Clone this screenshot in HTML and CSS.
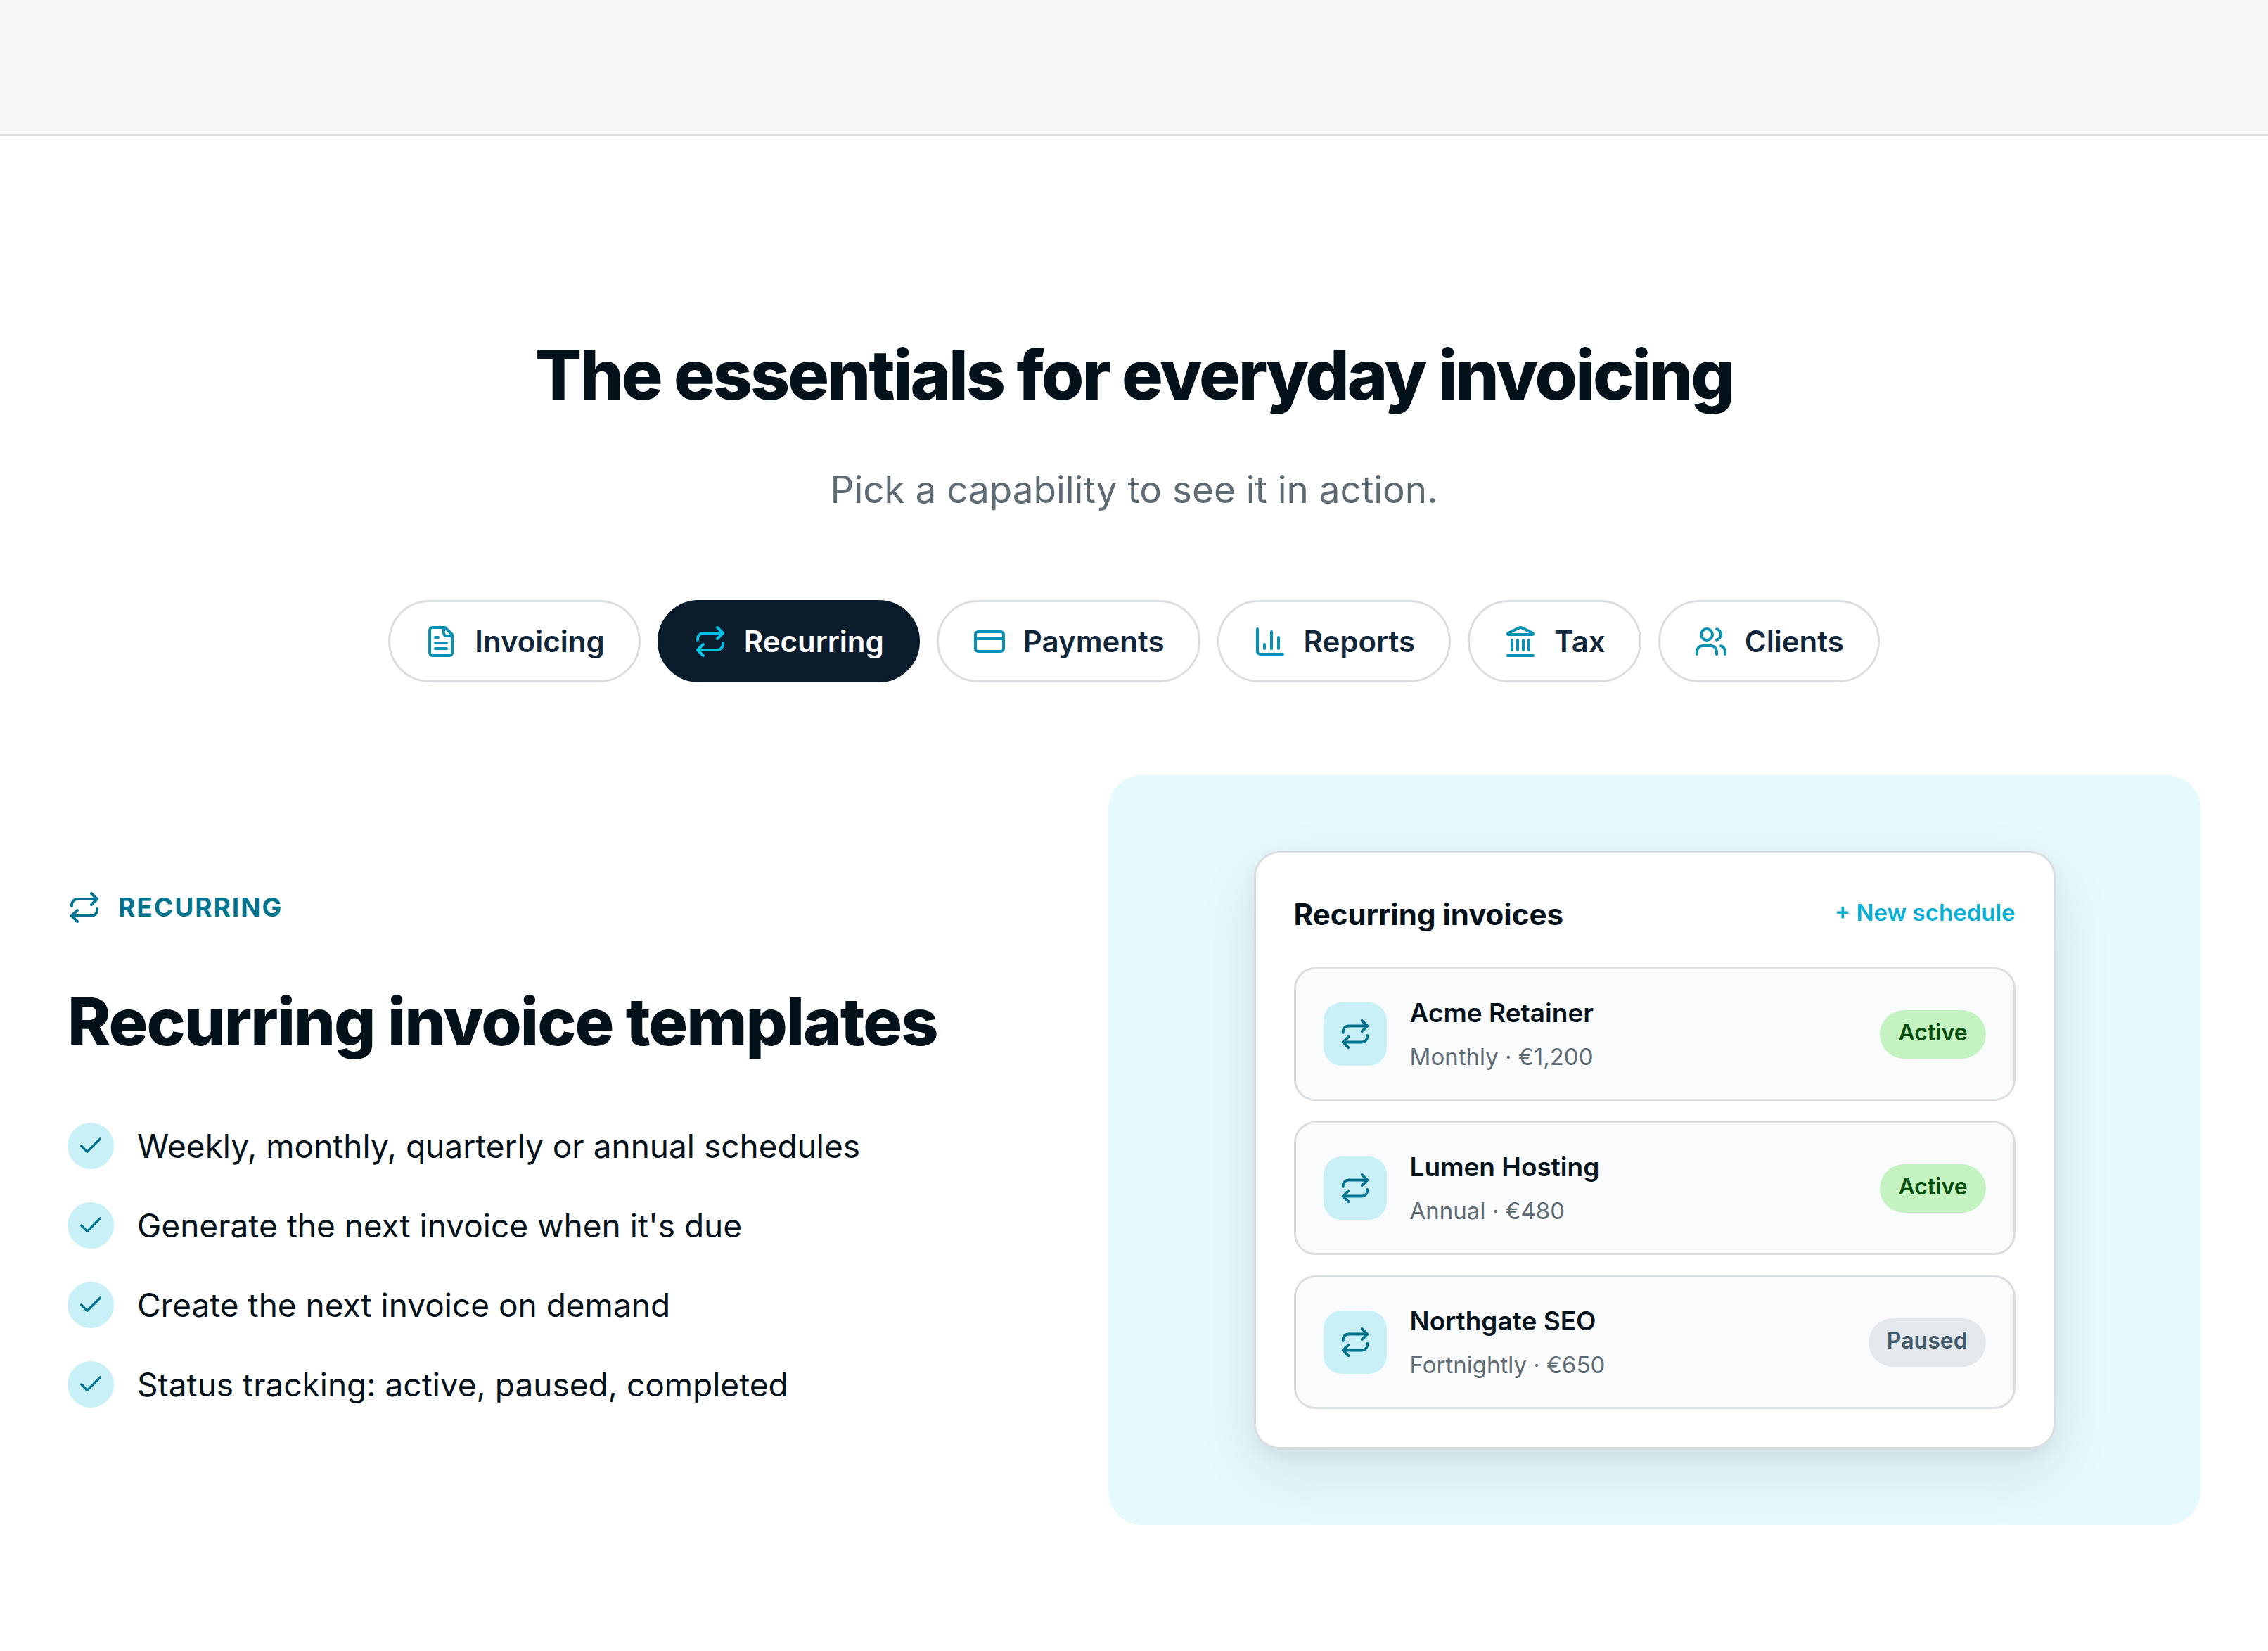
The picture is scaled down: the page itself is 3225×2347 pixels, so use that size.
FILE: index.html
```html
<!DOCTYPE html>
<html lang="en">
<head>
<meta charset="utf-8">
<meta name="viewport" content="width=device-width, initial-scale=1">
<title>The essentials for everyday invoicing</title>
<link rel="stylesheet" href="styles.css">
</head>
<body>
<svg class="sprite" aria-hidden="true">
  <symbol id="i-repeat" viewBox="0 0 24 24"><path d="m17 2 4 4-4 4"/><path d="M3 11v-1a4 4 0 0 1 4-4h14"/><path d="m7 22-4-4 4-4"/><path d="M21 13v1a4 4 0 0 1-4 4H3"/></symbol>
  <symbol id="i-check" viewBox="0 0 24 24"><path d="M20 6 9 17l-5-5"/></symbol>
</svg>
<div class="band"></div>
<main class="features">
  <header class="intro">
    <h1 class="intro-title">The essentials for everyday invoicing</h1>
    <p class="intro-text">Pick a capability to see it in action.</p>
  </header>
  <div class="tabs" role="tablist" aria-label="Capabilities">
    <button class="tab" type="button" role="tab" aria-selected="false">
      <svg class="icon" viewBox="0 0 24 24" aria-hidden="true"><path d="M15 2H6a2 2 0 0 0-2 2v16a2 2 0 0 0 2 2h12a2 2 0 0 0 2-2V7Z"/><path d="M14 2v4a2 2 0 0 0 2 2h4"/><path d="M10 9H8"/><path d="M16 13H8"/><path d="M16 17H8"/></svg>
      Invoicing
    </button>
    <button class="tab tab-active" type="button" role="tab" aria-selected="true">
      <svg class="icon" aria-hidden="true"><use href="#i-repeat"/></svg>
      Recurring
    </button>
    <button class="tab" type="button" role="tab" aria-selected="false">
      <svg class="icon" viewBox="0 0 24 24" aria-hidden="true"><rect width="20" height="14" x="2" y="5" rx="2"/><path d="M2 10h20"/></svg>
      Payments
    </button>
    <button class="tab" type="button" role="tab" aria-selected="false">
      <svg class="icon" viewBox="0 0 24 24" aria-hidden="true"><path d="M3 3v16a2 2 0 0 0 2 2h16"/><path d="M18 17V9"/><path d="M13 17V5"/><path d="M8 17v-3"/></svg>
      Reports
    </button>
    <button class="tab" type="button" role="tab" aria-selected="false">
      <svg class="icon" viewBox="0 0 24 24" aria-hidden="true"><path d="M10 18v-7"/><path d="M11.12 2.198a2 2 0 0 1 1.76.006l7.866 3.847c.476.233.31.949-.22.949H3.474c-.53 0-.695-.716-.22-.949z"/><path d="M14 18v-7"/><path d="M18 18v-7"/><path d="M3 22h18"/><path d="M6 18v-7"/></svg>
      Tax
    </button>
    <button class="tab" type="button" role="tab" aria-selected="false">
      <svg class="icon" viewBox="0 0 24 24" aria-hidden="true"><path d="M16 21v-2a4 4 0 0 0-4-4H6a4 4 0 0 0-4 4v2"/><path d="M16 3.128a4 4 0 0 1 0 7.744"/><path d="M22 21v-2a4 4 0 0 0-3-3.87"/><circle cx="9" cy="7" r="4"/></svg>
      Clients
    </button>
  </div>
  <section class="detail" role="tabpanel">
    <div class="copy">
      <p class="eyebrow"><svg class="icon" aria-hidden="true"><use href="#i-repeat"/></svg>Recurring</p>
      <h2 class="copy-title">Recurring invoice templates</h2>
      <ul class="points">
        <li class="point"><span class="tick"><svg class="icon icon-check" aria-hidden="true"><use href="#i-check"/></svg></span>Weekly, monthly, quarterly or annual schedules</li>
        <li class="point"><span class="tick"><svg class="icon icon-check" aria-hidden="true"><use href="#i-check"/></svg></span>Generate the next invoice when it's due</li>
        <li class="point"><span class="tick"><svg class="icon icon-check" aria-hidden="true"><use href="#i-check"/></svg></span>Create the next invoice on demand</li>
        <li class="point"><span class="tick"><svg class="icon icon-check" aria-hidden="true"><use href="#i-check"/></svg></span>Status tracking: active, paused, completed</li>
      </ul>
    </div>
    <div class="stage">
      <div class="card">
        <div class="card-head">
          <h3 class="card-title">Recurring invoices</h3>
          <a class="card-link" href="#">+ New schedule</a>
        </div>
        <ul class="schedules">
          <li class="schedule">
            <span class="tile"><svg class="icon icon-tile" aria-hidden="true"><use href="#i-repeat"/></svg></span>
            <div class="schedule-text"><p class="schedule-name">Acme Retainer</p><p class="schedule-meta">Monthly · €1,200</p></div>
            <span class="badge badge-active">Active</span>
          </li>
          <li class="schedule">
            <span class="tile"><svg class="icon icon-tile" aria-hidden="true"><use href="#i-repeat"/></svg></span>
            <div class="schedule-text"><p class="schedule-name">Lumen Hosting</p><p class="schedule-meta">Annual · €480</p></div>
            <span class="badge badge-active">Active</span>
          </li>
          <li class="schedule">
            <span class="tile"><svg class="icon icon-tile" aria-hidden="true"><use href="#i-repeat"/></svg></span>
            <div class="schedule-text"><p class="schedule-name">Northgate SEO</p><p class="schedule-meta">Fortnightly · €650</p></div>
            <span class="badge badge-paused">Paused</span>
          </li>
        </ul>
      </div>
    </div>
  </section>
</main>
</body>
</html>
```
FILE: styles.css
```css
*, *::before, *::after { box-sizing: border-box; }

body {
  margin: 0;
  background: #fff;
  color: #03121a;
  font-family: Inter, "Liberation Sans", sans-serif;
}

h1, h2, h3, p, ul { margin: 0; padding: 0; }
ul { list-style: none; }

.sprite { display: none; }

.icon {
  flex: none;
  width: 48px;
  height: 48px;
  fill: none;
  stroke: currentColor;
  stroke-width: 2;
  stroke-linecap: round;
  stroke-linejoin: round;
}

.band {
  height: 193px;
  background: #f5f7f9;
  border-bottom: 3px solid #dbdee1;
}

.features { padding: 284px 96px 180px; }

.intro { text-align: center; }

.intro-title {
  font-size: 98px;
  line-height: 112px;
  font-weight: 800;
  letter-spacing: -3px;
}

.intro-text {
  margin-top: 67px;
  font-size: 53px;
  line-height: 80px;
  color: #5f6b73;
}

.tabs {
  display: flex;
  flex-wrap: wrap;
  justify-content: center;
  gap: 24px;
  margin-top: 117px;
}

.tab {
  display: flex;
  align-items: center;
  gap: 24px;
  padding: 24px 48px;
  border: 3px solid #dbdee1;
  border-radius: 60px;
  background: #fff;
  color: #12263a;
  font-family: inherit;
  font-size: 42px;
  line-height: 63px;
  font-weight: 600;
}

.tab .icon { color: #0891b2; }

.tab-active {
  border-color: #0a1c2c;
  background: #0a1c2c;
  color: #fff;
}

.tab-active .icon { color: #06bfe8; }

.detail {
  display: grid;
  grid-template-columns: 1fr 1.15fr;
  align-items: center;
  gap: 130px;
  margin-top: 132px;
}

.copy { padding-bottom: 4px; }

.eyebrow {
  display: flex;
  align-items: center;
  gap: 24px;
  color: #00748f;
  font-size: 37px;
  line-height: 58px;
  font-weight: 700;
  letter-spacing: 2px;
  text-transform: uppercase;
}

.copy-title {
  margin-top: 80px;
  font-size: 93px;
  line-height: 107px;
  font-weight: 800;
  letter-spacing: -2px;
}

.points {
  display: grid;
  gap: 39px;
  margin-top: 86px;
}

.point {
  display: flex;
  align-items: center;
  gap: 33px;
  font-size: 46px;
  line-height: 74px;
}

.tick, .tile {
  display: flex;
  flex: none;
  align-items: center;
  justify-content: center;
  background: #caf0f7;
  color: #00748f;
}

.tick {
  width: 66px;
  height: 66px;
  border-radius: 50%;
}

.icon-check { width: 40px; height: 40px; }

.stage {
  display: flex;
  justify-content: center;
  padding: 108px 60px;
  border-radius: 48px;
  background: #e6f9fd;
}

.card {
  width: 100%;
  max-width: 1140px;
  padding: 54px;
  border: 3px solid #dbdee1;
  border-radius: 36px;
  background: #fff;
  box-shadow: 0 33px 88px rgba(10, 28, 44, 0.09), 0 11px 22px rgba(10, 28, 44, 0.05);
}

.card-head {
  display: flex;
  align-items: flex-start;
  justify-content: space-between;
}

.card-title {
  font-size: 42px;
  line-height: 66px;
  font-weight: 700;
}

.card-link {
  color: #06afd6;
  font-size: 33px;
  line-height: 60px;
  font-weight: 600;
  text-decoration: none;
}

.schedules {
  display: grid;
  gap: 29px;
  margin-top: 42px;
}

.schedule {
  display: flex;
  align-items: center;
  gap: 33px;
  padding: 33px 39px;
  border: 3px solid #dbdee1;
  border-radius: 30px;
  background: #fafbfd;
}

.tile {
  width: 90px;
  height: 90px;
  border-radius: 26px;
}

.icon-tile { width: 46px; height: 46px; }

.schedule-text { flex: 1; }

.schedule-name {
  font-size: 37px;
  line-height: 58px;
  font-weight: 600;
}

.schedule-meta {
  margin-top: 6px;
  color: #5f6b73;
  font-size: 33px;
  line-height: 54px;
}

.badge {
  padding: 6px 26px 12px;
  border-radius: 36px;
  font-size: 32px;
  line-height: 51px;
  font-weight: 600;
}

.badge-active { background: #c4f3c1; color: #064d0c; }
.badge-paused { background: #e3e8ed; color: #435a6b; }
```
